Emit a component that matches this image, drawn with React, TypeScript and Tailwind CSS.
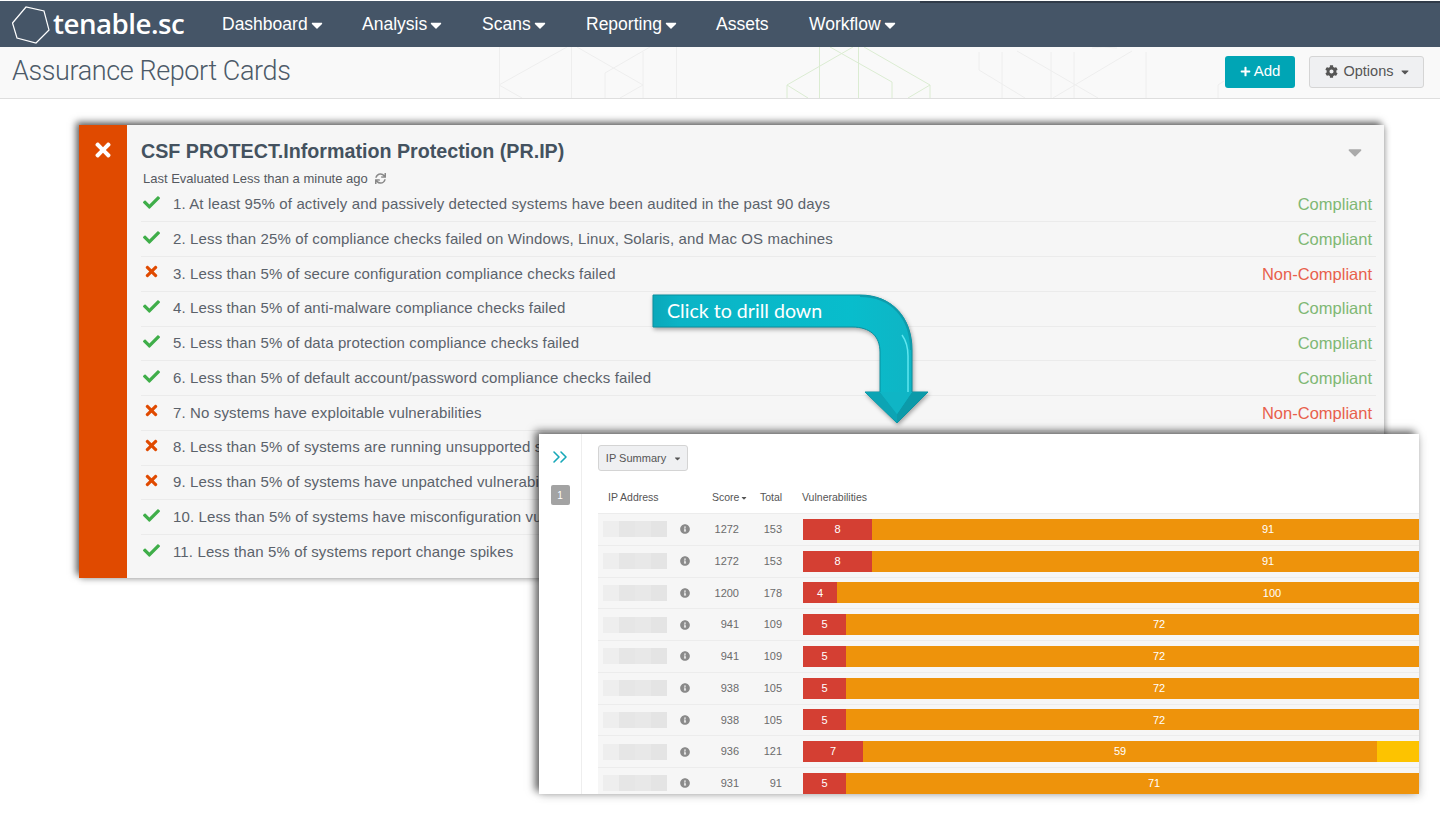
import { ChevronsRight } from "lucide-react";
import {
  FaCaretDown,
  FaCheck,
  FaCog,
  FaInfoCircle,
  FaPlus,
  FaSync,
  FaTimes,
} from "react-icons/fa";

const navItems = [
  { label: "Dashboard", caret: true, width: "w-[140px]" },
  { label: "Analysis", caret: true, width: "w-[120px]" },
  { label: "Scans", caret: true, width: "w-[104px]" },
  { label: "Reporting", caret: true, width: "w-[130px]" },
  { label: "Assets", caret: false, width: "w-[93px]" },
  { label: "Workflow", caret: true, width: "w-[100px]" },
];

const checks = [
  { ok: true, text: "1. At least 95% of actively and passively detected systems have been audited in the past 90 days" },
  { ok: true, text: "2. Less than 25% of compliance checks failed on Windows, Linux, Solaris, and Mac OS machines" },
  { ok: false, text: "3. Less than 5% of secure configuration compliance checks failed" },
  { ok: true, text: "4. Less than 5% of anti-malware compliance checks failed" },
  { ok: true, text: "5. Less than 5% of data protection compliance checks failed" },
  { ok: true, text: "6. Less than 5% of default account/password compliance checks failed" },
  { ok: false, text: "7. No systems have exploitable vulnerabilities" },
  { ok: false, text: "8. Less than 5% of systems are running unsupported software" },
  { ok: false, text: "9. Less than 5% of systems have unpatched vulnerabilities" },
  { ok: true, text: "10. Less than 5% of systems have misconfiguration vulnerabilities" },
  { ok: true, text: "11. Less than 5% of systems report change spikes" },
];

const ipRows = [
  { score: 1272, total: 153, red: 8, redW: 69, orange: 91, orangeW: 792, yellowW: 0 },
  { score: 1272, total: 153, red: 8, redW: 69, orange: 91, orangeW: 792, yellowW: 0 },
  { score: 1200, total: 178, red: 4, redW: 34, orange: 100, orangeW: 870, yellowW: 0 },
  { score: 941, total: 109, red: 5, redW: 43, orange: 72, orangeW: 626, yellowW: 0 },
  { score: 941, total: 109, red: 5, redW: 43, orange: 72, orangeW: 626, yellowW: 0 },
  { score: 938, total: 105, red: 5, redW: 43, orange: 72, orangeW: 626, yellowW: 0 },
  { score: 938, total: 105, red: 5, redW: 43, orange: 72, orangeW: 626, yellowW: 0 },
  { score: 936, total: 121, red: 7, redW: 60, orange: 59, orangeW: 514, yellowW: 60 },
  { score: 931, total: 91, red: 5, redW: 43, orange: 71, orangeW: 616, yellowW: 0 },
];

function Logo() {
  return (
    <svg width="40" height="40" viewBox="0 0 40 40" className="shrink-0">
      <path d="M0.5 19 L14 3 L32 7 L37 26 L24 39 L5 34 Z" fill="none" stroke="#fff" strokeWidth="1.2" />
    </svg>
  );
}

// faint hexagon lines behind the page title bar
function HeaderPattern() {
  return (
    <svg className="absolute left-[490px] top-0" width="740" height="51" viewBox="0 0 740 51" fill="none">
      <g stroke="#eeeeee" strokeWidth="1">
        <path d="M9.5 0V51M81.5 0V51M153 5V51M186.5 0V51M115 26V51" />
        <path d="M9 38L77 0M9 38L32 51M87 0L153 38L130 51M115 26L160 0" />
        <path d="M489 5V23L535 51M512 5V51M561 5V51M584 5V51M656 5V51" />
        <path d="M527 4L608 51M642 4L563 51M602 1L613 0L627 1M728 51V38L734 34" />
      </g>
      <g stroke="#dbecd2" strokeWidth="1">
        <path d="M329.5 0V51M368.5 0V51M297 38V51M440 38V51M402 35V51" />
        <path d="M297 38L363 0M297 38L318 51M340 0L402 35M374 0L440 38L418 51" />
      </g>
    </svg>
  );
}

function ClickArrow() {
  return (
    <svg
      className="absolute left-[648px] top-[290px] z-20 drop-shadow-[1px_2px_2px_rgba(0,0,0,0.35)]"
      width="290"
      height="140"
      viewBox="0 0 290 140"
    >
      <defs>
        <linearGradient id="band" x1="0" y1="0" x2="1" y2="0">
          <stop offset="0" stopColor="#0aa8ba" />
          <stop offset="0.1" stopColor="#0bb4c6" />
          <stop offset="0.72" stopColor="#08bdcc" />
          <stop offset="0.95" stopColor="#0fb4c4" />
          <stop offset="1" stopColor="#0e93a3" />
        </linearGradient>
      </defs>
      <path
        d="M5 5 H212 C244 5 264 28 264 60 V102 H280 L249 133 L217 102 H232 V62 C232 46 222 37 204 37 H5 Z"
        fill="url(#band)"
        stroke="#0a8f9e"
        strokeWidth="1"
      />
      <path d="M212 6 C244 6 263 28 263 60" stroke="#0e9cac" strokeWidth="2" fill="none" />
      <path d="M217 102 H232 L249 124 L249 133 Z" fill="#0ca4b4" />
      <path d="M280 102 H264 L249 124 L249 133 Z" fill="#0c9aa9" />
      <path d="M232 102 H264 L249 124 Z" fill="#0fb5c5" />
      <path d="M254 45 C259 52 260 58 260 66 V102" stroke="#5fe6ef" strokeWidth="1.5" fill="none" />
    </svg>
  );
}

function ComplianceRow({ ok, text }: { ok: boolean; text: string }) {
  return (
    <div className="flex h-[34.75px] items-center border-b border-[#ebebeb] last:border-b-0">
      <div className="w-[32px] pl-[2px] pb-[4px] shrink-0">
        {ok ? (
          <FaCheck className="text-[17px] text-[#3fae49]" />
        ) : (
          <FaTimes className="text-[17px] text-[#e04a00]" />
        )}
      </div>
      <span className="text-[15px] text-[#5b626b] whitespace-nowrap tracking-[0.13px]">{text}</span>
      <span className={`ml-auto pr-[4px] text-[16.5px] ${ok ? "text-[#7fb874]" : "text-[#e8604c]"}`}>
        {ok ? "Compliant" : "Non-Compliant"}
      </span>
    </div>
  );
}

function ReportCard() {
  return (
    <div className="ml-[79px] mt-[26px] flex h-[453px] w-[1305px] bg-[#f6f6f6] shadow-[-3px_-3px_7px_rgba(0,0,0,0.6),2px_2px_6px_rgba(0,0,0,0.2)]">
      <div className="flex w-[48px] shrink-0 justify-center bg-[#e04a00] pt-[14px]">
        <FaTimes className="text-[22px] text-white" />
      </div>
      <div className="flex-1 pl-[14px] pr-[8px]">
        <div className="flex items-center pt-[12px]">
          <h2 className="text-[19.7px] font-bold text-[#44525f] whitespace-nowrap">
            CSF PROTECT.Information Protection (PR.IP)
          </h2>
          <FaCaretDown className="ml-auto mr-[10px] text-[#aaaaaa] text-[22px]" />
        </div>
        <div className="mt-[4px] flex h-[16px] items-center gap-[7px] pl-[2px] text-[13px] text-[#55595f]">
          Last Evaluated Less than a minute ago
          <FaSync className="text-[11px] text-[#888888]" />
        </div>
        <div className="mt-[1px]">
          {checks.map((c) => (
            <ComplianceRow key={c.text} ok={c.ok} text={c.text} />
          ))}
        </div>
      </div>
    </div>
  );
}

function IpRow({ row }: { row: (typeof ipRows)[number] }) {
  return (
    <div className="flex h-[31.75px] items-center border-b border-[#ececec] bg-[#f6f6f6] text-[11px] text-[#6b6b6b]">
      <div className="ml-[5px] flex h-[16px] w-[64px] shrink-0">
        <div className="w-[16px] bg-[#eeeeee]" />
        <div className="w-[16px] bg-[#e6e6e6]" />
        <div className="w-[16px] bg-[#e8e8e8]" />
        <div className="w-[16px] bg-[#e4e4e4]" />
      </div>
      <FaInfoCircle className="ml-[13px] shrink-0 text-[10px] text-[#8a8a8a]" />
      <span className="w-[49px] shrink-0 text-right">{row.score}</span>
      <span className="w-[43px] shrink-0 text-right">{row.total}</span>
      <div className="ml-[21px] flex h-[21px] shrink-0 text-white shadow-[inset_0_1px_0_rgba(0,0,0,0.08)]">
        <div className="flex items-center justify-center bg-[#d43f33]" style={{ width: row.redW }}>
          {row.red}
        </div>
        <div className="flex items-center justify-center bg-[#ee930b]" style={{ width: row.orangeW }}>
          {row.orange}
        </div>
        {row.yellowW > 0 && <div className="bg-[#fdc300]" style={{ width: row.yellowW }} />}
      </div>
    </div>
  );
}

function DrillPanel() {
  return (
    <div className="absolute left-[539px] top-[434px] z-10 flex h-[360px] w-[880px] overflow-hidden bg-white shadow-[-4px_-3px_8px_rgba(0,0,0,0.6),2px_3px_8px_rgba(0,0,0,0.12)]">
      <div className="flex w-[43px] shrink-0 flex-col items-center border-r border-[#eeeeee] pt-[11px]">
        <ChevronsRight size={24} strokeWidth={1.6} className="text-[#17a8b8]" />
        <div className="mt-[16px] flex h-[20px] w-[19px] items-center justify-center rounded-[2px] bg-[#a3a3a3] text-[10px] text-white">
          1
        </div>
      </div>
      <div className="min-w-0 flex-1 pl-[16px] pt-[11px]">
        <div className="flex h-[26px] w-[90px] items-center justify-center gap-[7px] rounded-[3px] border border-[#d4d4d4] bg-[#eff0f2] pl-[2px] text-[11px] text-[#555555]">
          IP Summary
          <FaCaretDown className="text-[9px]" />
        </div>
        <div className="mb-[3px] mt-[14px] flex h-[26px] items-center text-[10.5px] text-[#555555]">
          <span className="ml-[10px] w-[104px] shrink-0">IP Address</span>
          <span className="flex w-[48px] shrink-0 items-center gap-[1px]">
            Score
            <FaCaretDown className="text-[8px]" />
          </span>
          <span className="w-[42px] shrink-0">Total</span>
          <span>Vulnerabilities</span>
        </div>
        <div className="-mt-px border-t border-[#ececec]">
          {ipRows.map((r, i) => (
            <IpRow key={i} row={r} />
          ))}
        </div>
      </div>
    </div>
  );
}

export default function App() {
  return (
    <div className="relative h-[820px] w-[1440px] overflow-hidden bg-white font-['Liberation_Sans',sans-serif]">
      <div className="pt-px">
        <nav className="relative flex h-[46px] items-center bg-[#455567] pl-[12px] text-white">
          <div className="absolute right-0 top-0 h-[2px] w-[520px] bg-[#303b49]" />
          <Logo />
          <span className="ml-[1px] w-[169px] pb-[1px] font-['Open_Sans',sans-serif] text-[27.7px] font-semibold tracking-[-0.5px]">
            tenable.sc
          </span>
          {navItems.map((item) => (
            <div key={item.label} className={`flex items-center pt-[1px] text-[17.5px] ${item.width}`}>
              {item.label}
              {item.caret && <FaCaretDown className="text-[18px]" />}
            </div>
          ))}
        </nav>
      </div>
      <header className="relative flex h-[52px] items-center border-b border-[#dedede] bg-[#f9f9f9] pb-[2px] pl-[12px] pr-[16px]">
        <HeaderPattern />
        <h1 className="relative font-['Roboto',sans-serif] text-[27px] font-light tracking-[-0.4px] text-[#4c5a68]">
          Assurance Report Cards
        </h1>
        <div className="relative ml-auto flex items-center gap-[14px]">
          <button className="flex h-[32px] w-[70px] items-center justify-center gap-[3px] rounded-[3px] bg-[#00a5b5] text-[15px] text-white">
            <FaPlus className="text-[11px]" />
            Add
          </button>
          <button className="flex h-[32px] w-[115px] items-center justify-center gap-[6px] rounded-[3px] border border-[#d5d5d5] bg-[#eff0f2] pl-[3px] text-[14.5px] text-[#555555]">
            <FaCog className="text-[13px]" />
            Options
            <FaCaretDown className="text-[12px]" />
          </button>
        </div>
      </header>
      <ReportCard />
      <DrillPanel />
      <ClickArrow />
      <div className="absolute left-[667px] top-[296px] z-30 font-['Lato',sans-serif] text-[19.6px] text-white">
        Click to drill down
      </div>
    </div>
  );
}
